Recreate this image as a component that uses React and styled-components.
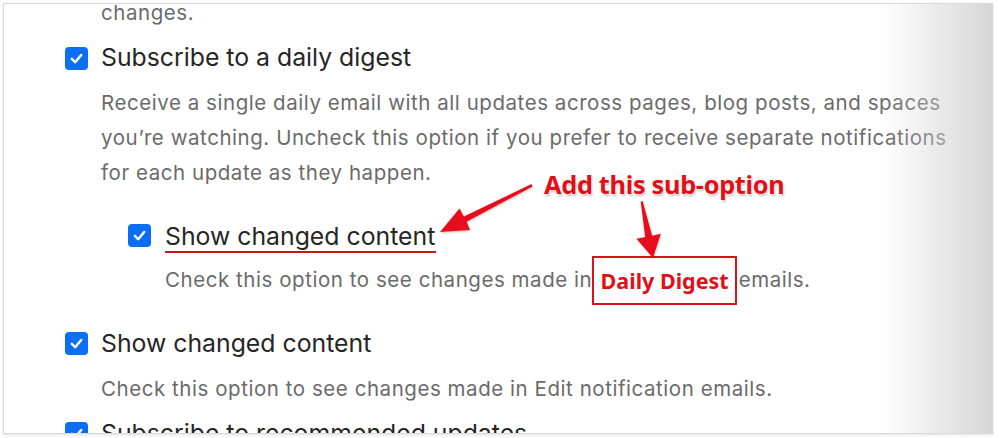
import React from 'react'
import styled, { createGlobalStyle } from 'styled-components'

const GlobalStyle = createGlobalStyle`
  body {
    margin: 0;
    background: #ffffff;
    font-family: Inter, "Liberation Sans", sans-serif;
  }
`

const Canvas = styled.div`
  position: relative;
  width: 999px;
  height: 438px;
  overflow: hidden;
`

const Frame = styled.div`
  position: relative;
  margin: 3px 0 0 3px;
  width: 990px;
  height: 431px;
  box-sizing: border-box;
  border: 1px solid #d9d9d9;
  overflow: hidden;
  background: #ffffff;
  box-shadow: 0 1px 3px rgba(0, 0, 0, 0.12);

  &::after {
    content: '';
    position: absolute;
    top: 0;
    right: 0;
    bottom: 0;
    width: 110px;
    background: linear-gradient(to right, rgba(255, 255, 255, 0), rgba(210, 210, 210, 0.9));
    pointer-events: none;
  }
`

const Content = styled.div`
  margin-top: -9px;
  padding-left: 61px;
`

const Option = styled.div`
  display: flex;
  flex-direction: column;
  margin-top: ${p => (p.$nested ? '27px' : '10px')};
  margin-bottom: ${p => (p.$nested ? '27px' : '0')};
  margin-left: ${p => (p.$nested ? '63px' : '0')};
`

const TitleRow = styled.div`
  display: flex;
  align-items: center;
  gap: ${p => (p.$nested ? '14px' : '13px')};
  height: 36px;
  margin-bottom: 9px;
`

const Box = styled.span`
  flex: none;
  width: 23px;
  height: 23px;
  border-radius: 4px;
  background: #0b6ff4;
  display: flex;
  align-items: center;
  justify-content: center;
`

const Title = styled.span`
  font-size: 24.8px;
  line-height: 34px;
  margin-bottom: 2px;
  color: #262626;
  ${p => p.$marked && `
    line-height: 30px;
    padding-right: 1px;
    border-bottom: 2px solid #c8161e;
    margin: 4px 0 0;
  `}
`

const Desc = styled.p`
  margin: 0;
  padding-left: ${p => (p.$nested ? '37px' : '36px')};
  font-size: 20.5px;
  letter-spacing: 0.55px;
  line-height: 35px;
  color: #6b6b6b;
  white-space: nowrap;
`

const Highlight = styled.span`
  display: inline-block;
  vertical-align: middle;
  box-sizing: border-box;
  height: 49px;
  line-height: 45px;
  margin: -8px 2px -6px -7px;
  padding: 0 6px 0 7px;
  border: 2px solid #dd1118;
  color: #e30f17;
  font-family: "Noto Sans", "Open Sans", sans-serif;
  font-weight: 700;
  font-size: 21.5px;
  letter-spacing: 0;
`

const Overlay = styled.svg`
  position: absolute;
  left: 0;
  top: 0;
  pointer-events: none;
`

const Callout = styled.div`
  position: absolute;
  left: 544px;
  top: 167px;
  color: #e30f17;
  font-family: "Noto Sans", "Open Sans", sans-serif;
  font-weight: 700;
  font-size: 25.3px;
  line-height: 34px;
  letter-spacing: -0.3px;
  text-shadow: 0 0 2px #fff, 0 0 2px #fff, 1px 2px 2px rgba(0, 0, 0, 0.25);
`

const Check = () => (
  <svg width="15" height="15" viewBox="0 0 16 16">
    <path d="M3 8.4 L6.6 12 L13 4.2" fill="none" stroke="#fff" strokeWidth="2.6" strokeLinecap="round" strokeLinejoin="round" />
  </svg>
)

export default function App() {
  return (
    <Canvas>
      <GlobalStyle />
      <Frame>
        <Content>
          <Desc>changes.</Desc>

          <Option>
            <TitleRow>
              <Box><Check /></Box>
              <Title>Subscribe to a daily digest</Title>
            </TitleRow>
            <Desc>
              Receive a single daily email with all updates across pages, blog posts, and spaces<br />
              you’re watching. Uncheck this option if you prefer to receive separate notifications<br />
              for each update as they happen.
            </Desc>
          </Option>

          <Option $nested>
            <TitleRow $nested>
              <Box><Check /></Box>
              <Title $marked>Show changed content</Title>
            </TitleRow>
            <Desc $nested>
              Check this option to see changes made in <Highlight>Daily Digest</Highlight>emails.
            </Desc>
          </Option>

          <Option>
            <TitleRow>
              <Box><Check /></Box>
              <Title>Show changed content</Title>
            </TitleRow>
            <Desc>Check this option to see changes made in Edit notification emails.</Desc>
          </Option>

          <Option>
            <TitleRow>
              <Box><Check /></Box>
              <Title>Subscribe to recommended updates</Title>
            </TitleRow>
          </Option>
        </Content>
      </Frame>

      <Callout>Add this sub-option</Callout>
      <Overlay width="999" height="438" viewBox="0 0 999 438">
        <defs>
          <filter id="sh" x="-20%" y="-20%" width="140%" height="140%">
            <feDropShadow dx="0.5" dy="1" stdDeviation="0.8" floodColor="#000" floodOpacity="0.25" />
          </filter>
        </defs>
        <polygon
          filter="url(#sh)"
          fill="#e8111a"
          points="531.5,184 463.8,216.4 459.5,208.5 440,232 470,230 466.6,221.8 532.5,186.4"
        />
        <polygon
          filter="url(#sh)"
          fill="#e8111a"
          points="640.7,201.5 645.2,237 636.5,238.8 653,258 660.8,233.8 652.1,235.8 642.7,201.3"
        />
      </Overlay>
    </Canvas>
  )
}
